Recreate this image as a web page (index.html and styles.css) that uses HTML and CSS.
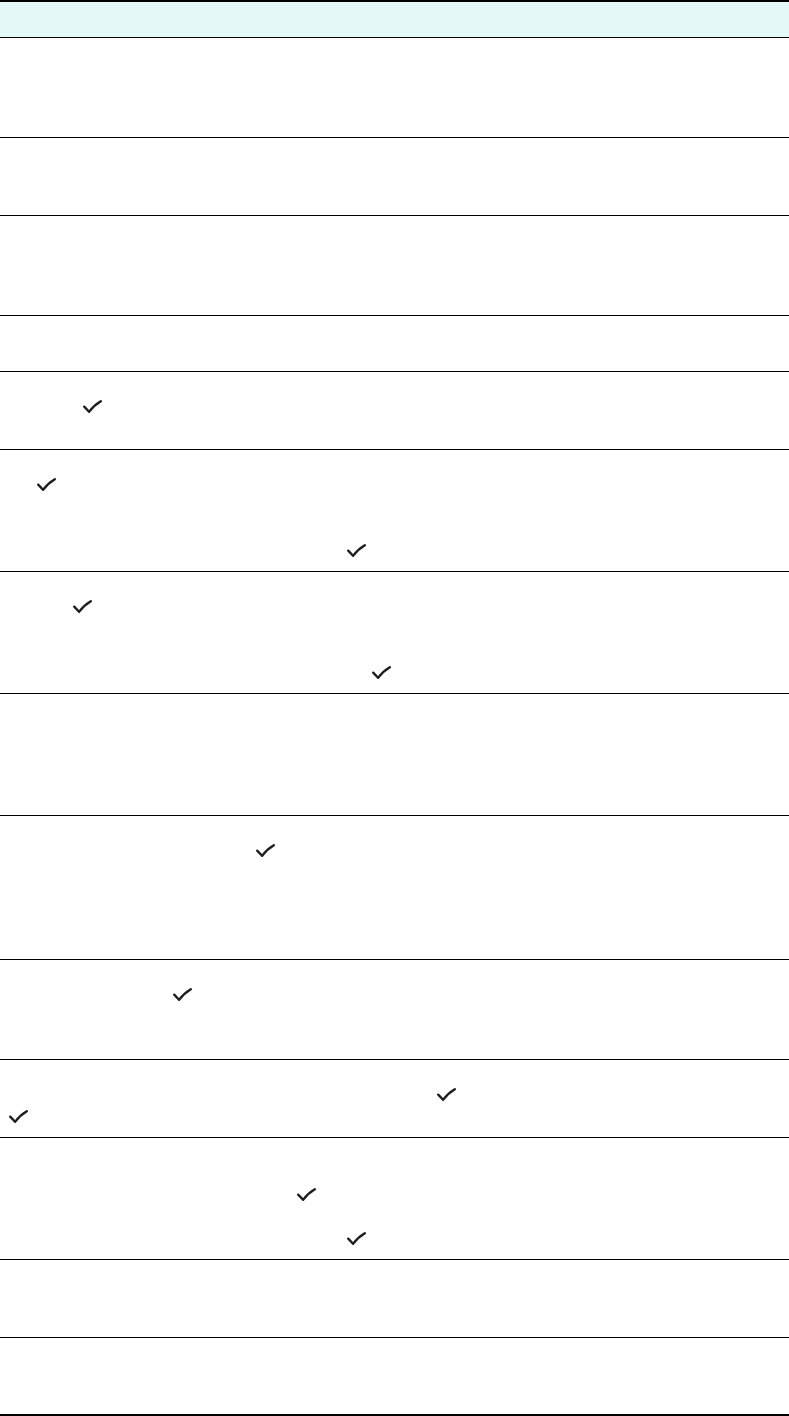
FILE: index.html
```html
<!DOCTYPE html>
<html lang="en">
<head>
<meta charset="utf-8">
<title>Table</title>
<link rel="stylesheet" href="styles.css">
</head>
<body>
<div class="table">
  <div class="head"></div>

  <div class="row"><div class="ln"></div><div class="ln"></div><div class="ln"></div></div>
  <div class="row"><div class="ln"></div><div class="ln"></div></div>
  <div class="row"><div class="ln"></div><div class="ln"></div><div class="ln"></div></div>
  <div class="row"><div class="ln"></div></div>

  <div class="row">
    <div class="ln"><svg class="chk" style="margin-left:83px" viewBox="0 0 19 13"><path d="M1.2 6.6 L6.1 11.8 Q10.5 5.6 17.8 1.2"/></svg></div>
    <div class="ln"></div>
  </div>

  <div class="row">
    <div class="ln"><svg class="chk" style="margin-left:37px" viewBox="0 0 19 13"><path d="M1.2 6.6 L6.1 11.8 Q10.5 5.6 17.8 1.2"/></svg></div>
    <div class="ln"></div>
    <div class="ln"></div>
    <div class="ln"><svg class="chk" style="margin-left:347px" viewBox="0 0 19 13"><path d="M1.2 6.6 L6.1 11.8 Q10.5 5.6 17.8 1.2"/></svg></div>
  </div>

  <div class="row">
    <div class="ln"><svg class="chk" style="margin-left:73px" viewBox="0 0 19 13"><path d="M1.2 6.6 L6.1 11.8 Q10.5 5.6 17.8 1.2"/></svg></div>
    <div class="ln"></div>
    <div class="ln"></div>
    <div class="ln"><svg class="chk" style="margin-left:372px" viewBox="0 0 19 13"><path d="M1.2 6.6 L6.1 11.8 Q10.5 5.6 17.8 1.2"/></svg></div>
  </div>

  <div class="row"><div class="ln"></div><div class="ln"></div><div class="ln"></div><div class="ln"></div></div>

  <div class="row">
    <div class="ln"><svg class="chk" style="margin-left:256px" viewBox="0 0 19 13"><path d="M1.2 6.6 L6.1 11.8 Q10.5 5.6 17.8 1.2"/></svg></div>
    <div class="ln"></div>
    <div class="ln"></div>
    <div class="ln"></div>
    <div class="ln"></div>
  </div>

  <div class="row">
    <div class="ln"><svg class="chk" style="margin-left:173px" viewBox="0 0 19 13"><path d="M1.2 6.6 L6.1 11.8 Q10.5 5.6 17.8 1.2"/></svg></div>
    <div class="ln"></div>
    <div class="ln"></div>
  </div>

  <div class="row">
    <div class="ln"><svg class="chk" style="margin-left:437px" viewBox="0 0 19 13"><path d="M1.2 6.6 L6.1 11.8 Q10.5 5.6 17.8 1.2"/></svg></div>
    <div class="ln"><svg class="chk" style="margin-left:9px" viewBox="0 0 19 13"><path d="M1.2 6.6 L6.1 11.8 Q10.5 5.6 17.8 1.2"/></svg></div>
  </div>

  <div class="row">
    <div class="ln"></div>
    <div class="ln"><svg class="chk" style="margin-left:297px" viewBox="0 0 19 13"><path d="M1.2 6.6 L6.1 11.8 Q10.5 5.6 17.8 1.2"/></svg></div>
    <div class="ln"></div>
    <div class="ln"><svg class="chk" style="margin-left:347px" viewBox="0 0 19 13"><path d="M1.2 6.6 L6.1 11.8 Q10.5 5.6 17.8 1.2"/></svg></div>
  </div>

  <div class="row"><div class="ln"></div><div class="ln"></div></div>
  <div class="row last"><div class="ln"></div><div class="ln"></div></div>
</div>
</body>
</html>
```

FILE: styles.css
```css
html, body {
  margin: 0;
  padding: 0;
  background: #ffffff;
}

body {
  font-family: "Liberation Sans", Arial, sans-serif;
  font-size: 16px;
  color: #222222;
}

.table {
  width: 789px;
  border-top: 2px solid #000000;
  border-bottom: 2px solid #000000;
  display: flex;
  flex-direction: column;
}

.head {
  height: 35px;
  background: #e3f8f7;
  border-bottom: 1px solid #000000;
}

.row {
  padding: 28px 0 5px 0;
  border-bottom: 1px solid #000000;
  display: flex;
  flex-direction: column;
}

.row.last {
  border-bottom: none;
  padding-bottom: 4px;
}

.ln {
  height: 22px;
  display: flex;
  align-items: flex-start;
}

.chk {
  display: block;
  width: 19px;
  height: 13px;
  flex: none;
}

.chk path {
  fill: none;
  stroke: #1e1e1e;
  stroke-width: 2.3;
  stroke-linecap: round;
  stroke-linejoin: miter;
}
```
